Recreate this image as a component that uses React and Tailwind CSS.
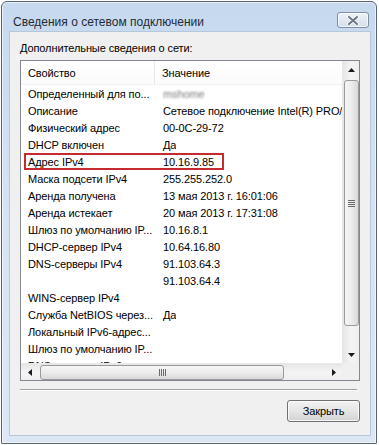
import React from 'react';

const rows = [
  ['Определенный для по...', 'blur'],
  ['Описание', 'Сетевое подключение Intel(R) PRO/1000 MT'],
  ['Физический адрес', '00-0C-29-72'],
  ['DHCP включен', 'Да'],
  ['Адрес IPv4', '10.16.9.85', true],
  ['Маска подсети IPv4', '255.255.252.0'],
  ['Аренда получена', '13 мая 2013 г. 16:01:06'],
  ['Аренда истекает', '20 мая 2013 г. 17:31:08'],
  ['Шлюз по умолчанию IP...', '10.16.8.1'],
  ['DHCP-сервер IPv4', '10.64.16.80'],
  ['DNS-серверы IPv4', '91.103.64.3'],
  ['', '91.103.64.4'],
  ['WINS-сервер IPv4', ''],
  ['Служба NetBIOS через...', 'Да'],
  ['Локальный IPv6-адрес...', ''],
  ['Шлюз по умолчанию IP...', ''],
  ['DNS-серверы IPv6', ''],
];

function Arrow({ dir }) {
  const pts = {
    up: '0,4 3.5,0 7,4',
    down: '0,0 3.5,4 7,0',
    left: '4,0 0,3.5 4,7',
    right: '0,0 4,3.5 0,7',
  }[dir];
  const vert = dir === 'up' || dir === 'down';
  return (
    <svg width={vert ? 7 : 4} height={vert ? 4 : 7} viewBox={vert ? '0 0 7 4' : '0 0 4 7'}>
      <polygon points={pts} fill="#1a1a1a" />
    </svg>
  );
}

export default function App() {
  return (
    <div className="w-[379px] h-[445px] bg-white pl-[1px] pt-[1px] font-['Liberation_Sans',Arial,sans-serif] text-[11px] tracking-[-0.1px] leading-[14px] text-black">
      <div className="w-[376px] h-[443px] border border-[#5a6470] rounded-t-[6px] rounded-b-[1px] bg-gradient-to-b from-[#c6d9ef] via-[#d6e3f3] to-[#dbe7f5] shadow-[inset_0_0_0_1px_rgba(255,255,255,0.6)] flex flex-col">
        {/* title bar */}
        <div className="h-[29px] flex items-start justify-between shrink-0">
          <span className="ml-[11px] mt-[13px] text-[12px] tracking-normal leading-[15px] text-[#1f2a36]">Сведения о сетевом подключении</span>
          <div className="mt-[10px] mr-[7px] w-[32px] h-[16px] rounded-[3px] border border-[#7f8ea3] bg-gradient-to-b from-[#eef3f9] to-[#d3deeb] shadow-[inset_0_0_0_1px_rgba(255,255,255,0.7)] flex items-center justify-center">
            <svg width="12" height="9" viewBox="0 0 12 9">
              <path d="M2 1 L10 8 M10 1 L2 8" stroke="#ffffff" strokeWidth="3.6" strokeLinecap="round" />
              <path d="M2 1 L10 8 M10 1 L2 8" stroke="#6a7584" strokeWidth="2" strokeLinecap="round" />
            </svg>
          </div>
        </div>

        {/* client */}
        <div className="ml-[7px] mr-[5px] mb-[7px] flex-1 bg-[#f0f0f0] border border-[#b7c7da] flex flex-col pl-[10px] pr-[10px]">
          <div className="pt-[9px]">Дополнительные сведения о сети:</div>

          <div className="mt-[5px] w-[340px] h-[321px] border border-[#828790] bg-white flex flex-col">
            <div className="flex flex-1 min-h-0">
              {/* list content */}
              <div className="w-[321px] overflow-hidden flex flex-col">
                <div className="h-[24px] shrink-0 flex items-center bg-gradient-to-b from-white to-[#fbfbfb] border-b border-[#f2f2f2]">
                  <div className="w-[134px] h-full pl-[7px] flex items-center border-r border-[#e3e7ec]">Свойство</div>
                  <div className="pl-[7px]">Значение</div>
                </div>
                {rows.map(([k, v, hl], i) => (
                  <div key={i} className="relative h-[17px] shrink-0 flex items-center whitespace-nowrap">
                    <div className="w-[134px] pl-[7px] overflow-hidden shrink-0">{k}</div>
                    <div className="pl-[8px] overflow-hidden">
                      {v === 'blur' ? (
                        <span className="text-[#7a7a7a] blur-[1.2px]">mshome</span>
                      ) : v}
                    </div>
                    {hl && <div className="absolute left-[3px] top-0 w-[200px] h-[17px] border-2 border-[#c42a30]" />}
                  </div>
                ))}
              </div>
              {/* vertical scrollbar */}
              <div className="w-[17px] bg-gradient-to-r from-[#e6e6e6] via-[#f4f4f4] to-[#efefef] border-l border-[#e9e9e9] flex flex-col items-center">
                <div className="h-[17px] w-full flex items-center justify-center shrink-0"><Arrow dir="up" /></div>
                <div className="mt-[2px] w-[15px] h-[246px] rounded-[3px] border border-[#9a9a9a] bg-gradient-to-r from-[#f6f6f6] via-[#ececec] to-[#d9d9d9] flex flex-col items-center justify-center gap-[1px] shrink-0">
                  <div className="w-[7px] h-[1px] bg-[#6a6a6a]" />
                  <div className="w-[7px] h-[1px] bg-[#6a6a6a]" />
                  <div className="w-[7px] h-[1px] bg-[#6a6a6a]" />
                  <div className="w-[7px] h-[1px] bg-[#6a6a6a]" />
                </div>
                <div className="flex-1" />
                <div className="h-[17px] w-full flex items-center justify-center shrink-0"><Arrow dir="down" /></div>
              </div>
            </div>
            {/* horizontal scrollbar */}
            <div className="h-[17px] shrink-0 flex">
              <div className="w-[321px] h-full bg-gradient-to-b from-[#e6e6e6] via-[#f4f4f4] to-[#efefef] border-t border-[#e9e9e9] flex items-center">
                <div className="w-[17px] h-full flex items-center justify-center shrink-0"><Arrow dir="left" /></div>
                <div className="ml-[2px] w-[244px] h-[15px] rounded-[3px] border border-[#9a9a9a] bg-gradient-to-b from-[#f6f6f6] via-[#ececec] to-[#d9d9d9] flex items-center justify-center gap-[1px] shrink-0">
                  <div className="w-[1px] h-[7px] bg-[#6a6a6a]" />
                  <div className="w-[1px] h-[7px] bg-[#6a6a6a]" />
                  <div className="w-[1px] h-[7px] bg-[#6a6a6a]" />
                  <div className="w-[1px] h-[7px] bg-[#6a6a6a]" />
                </div>
                <div className="flex-1" />
                <div className="w-[17px] h-full flex items-center justify-center shrink-0"><Arrow dir="right" /></div>
              </div>
              <div className="w-[17px] h-full bg-[#f0f0f0]" />
            </div>
          </div>

          <div className="mt-[8px] mr-[3px] h-[2px] border-t border-[#a0a0a0] border-b border-b-white" />

          <div className="mt-[9px] self-end w-[73px] h-[22px] rounded-[3px] border border-[#707070] bg-gradient-to-b from-[#f2f2f2] via-[#e6e6e6] to-[#d2d2d2] shadow-[inset_0_0_0_1px_rgba(255,255,255,0.8)] flex items-center justify-center">
            Закрыть
          </div>
        </div>
      </div>
    </div>
  );
}
